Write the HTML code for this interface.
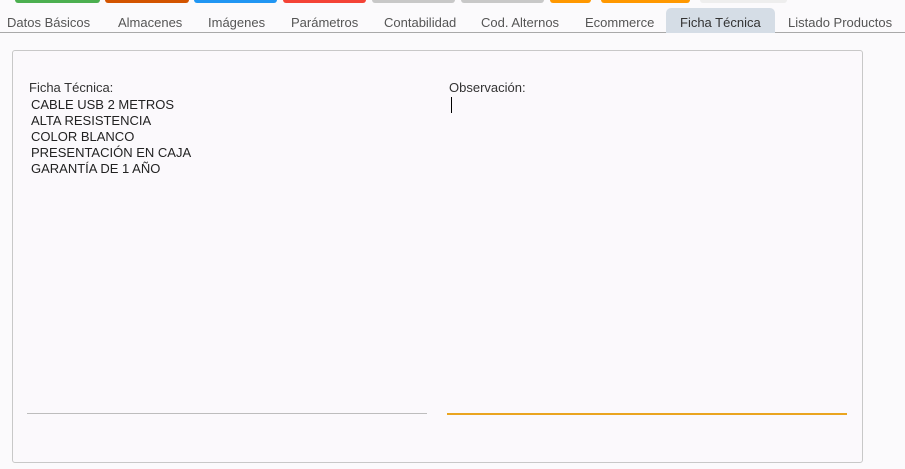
<!DOCTYPE html>
<html><head><meta charset="utf-8"><style>
*{margin:0;padding:0;box-sizing:border-box}
body{width:905px;height:469px;background:#fbfafc;font-family:"Liberation Sans",sans-serif;position:relative;overflow:hidden}
.b{position:absolute;top:0;height:3px;border-radius:0 0 4px 4px}
.tabs{position:absolute;top:0;left:0;width:905px;height:33px;border-bottom:1px solid #a9a9a9}
.t{position:absolute;top:15px;font-size:13px;color:#555;white-space:nowrap}
.act{position:absolute;left:666px;top:8px;width:109px;height:25px;background:#d5dde6;border-radius:5px 5px 0 0}
.panel{position:absolute;left:12px;top:50px;width:851px;height:413px;border:1px solid #c8c8c8;border-radius:3px;background:#fbf9fc}
.lbl{position:absolute;font-size:13px;color:#333}
.txt{position:absolute;left:31px;top:97px;font-size:13px;line-height:16px;color:#222}
</style></head><body>
<div class="b" style="left:15px;width:85px;background:#4caf50"></div>
<div class="b" style="left:105px;width:84px;background:#d35400"></div>
<div class="b" style="left:194px;width:83px;background:#2196f3"></div>
<div class="b" style="left:283px;width:83px;background:#f44336"></div>
<div class="b" style="left:372px;width:83px;background:#c8c8c8"></div>
<div class="b" style="left:461px;width:83px;background:#c8c8c8"></div>
<div class="b" style="left:550px;width:41px;background:#ff9800"></div>
<div class="b" style="left:601px;width:89px;background:#ff9800"></div>
<div class="b" style="left:700px;width:87px;background:#eee"></div>
<div class="tabs">
<div class="act"></div>
<span class="t" style="left:7px">Datos Básicos</span>
<span class="t" style="left:118px">Almacenes</span>
<span class="t" style="left:208px">Imágenes</span>
<span class="t" style="left:291px">Parámetros</span>
<span class="t" style="left:384px">Contabilidad</span>
<span class="t" style="left:481px">Cod. Alternos</span>
<span class="t" style="left:585px">Ecommerce</span>
<span class="t" style="left:680px;color:#333">Ficha Técnica</span>
<span class="t" style="left:788px">Listado Productos</span>
</div>
<div class="panel"></div>
<div class="lbl" style="left:29px;top:80px">Ficha Técnica:</div>
<div class="txt">CABLE USB 2 METROS<br>ALTA RESISTENCIA<br>COLOR BLANCO<br>PRESENTACIÓN EN CAJA<br>GARANTÍA DE 1 AÑO</div>
<div class="lbl" style="left:449px;top:80px">Observación:</div>
<div style="position:absolute;left:451px;top:97px;width:1px;height:16px;background:#000"></div>
<div style="position:absolute;left:27px;top:413px;width:400px;height:1px;background:#bdbdbd"></div>
<div style="position:absolute;left:447px;top:413px;width:400px;height:2px;border-top:2px solid #eaa520"></div>
</body></html>
